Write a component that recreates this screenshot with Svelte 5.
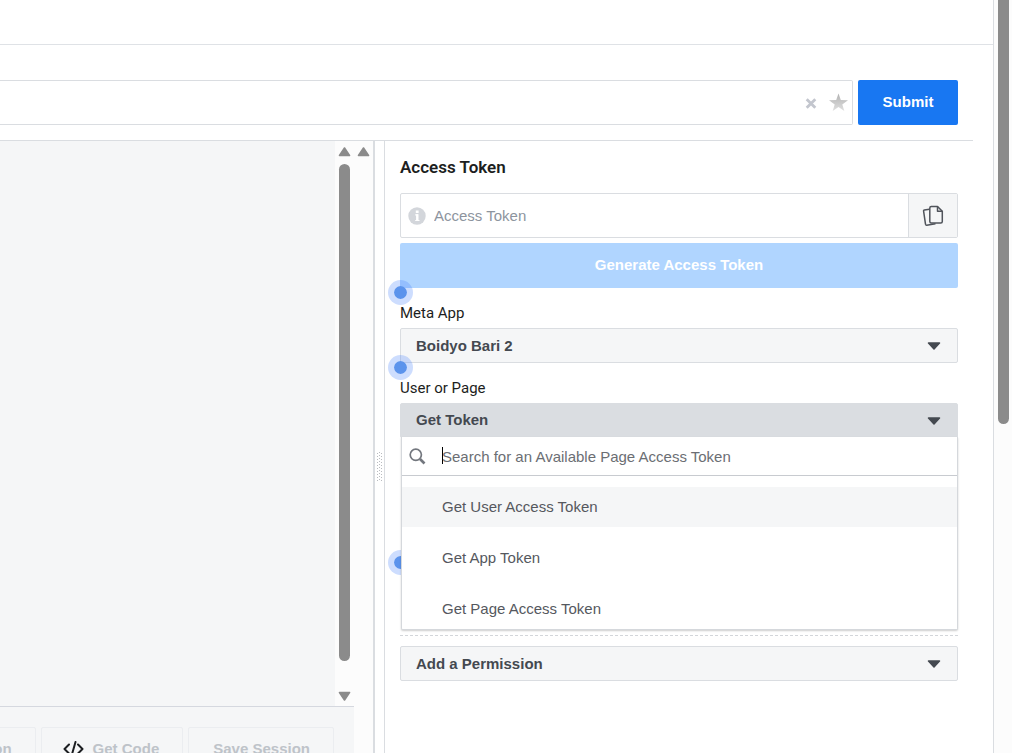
<script>
  const tokens = ['Get User Access Token', 'Get App Token', 'Get Page Access Token'];
  let active = $state(0);
  let query = $state('');
  let search = $state('');
</script>

<div class="page">
  <main>
    <header></header>

    <form class="query" onsubmit={(e) => e.preventDefault()}>
      <div class="field">
        <input aria-label="Query" bind:value={query} />
        <button type="button" class="icon" aria-label="Clear">
          <svg width="12" height="12" viewBox="0 0 12 12"><path d="M1.700 2.200 10.300 10.800M10.300 2.200 1.700 10.800" stroke="#c3c6ce" stroke-width="2.800" /></svg>
        </button>
        <button type="button" class="icon" aria-label="Favorite">
          <svg width="19" height="20" viewBox="0 0 19 20">
            <defs><linearGradient id="star" x1="0" y1="0" x2="0" y2="1"><stop offset="0" stop-color="#b2b2b2" /><stop offset="1" stop-color="#e0e0e0" /></linearGradient></defs>
            <path d="M9.500 0.500 11.800 7 19 7.200 13.300 11.400 15.300 18.100 9.500 14.100 3.700 18.100 5.700 11.400 0 7.200 7.200 7Z" fill="url(#star)" />
          </svg>
        </button>
      </div>
      <button class="submit">Submit</button>
    </form>

    <div class="workspace">
      <section class="response">
        <div class="result">
          <div class="editor">
            <div class="code"></div>
            <div class="rail">
              <svg width="13" height="10" viewBox="0 0 13 10"><path d="M6.500 1 11.500 8.500H1.500Z" fill="#8b8b8b" stroke="#8b8b8b" stroke-width="1.600" stroke-linejoin="round" /></svg>
              <div class="thumb"></div>
              <svg width="13" height="10" viewBox="0 0 13 10"><path d="M6.500 9 11.500 1.500H1.500Z" fill="#8b8b8b" stroke="#8b8b8b" stroke-width="1.600" stroke-linejoin="round" /></svg>
            </div>
          </div>
          <footer>
            <button>Copy Debug Information</button>
            <button class="with-icon">
              <svg width="21" height="16" viewBox="0 0 21 16"><path d="M6 3.500 1.500 8 6 12.500M15 3.500 19.500 8 15 12.500M12.500 1 8.500 15" fill="none" stroke="#1c1e21" stroke-width="2" stroke-linecap="round" stroke-linejoin="round" /></svg>
              Get Code
            </button>
            <button>Save Session</button>
          </footer>
        </div>
        <div class="rail outer">
          <svg width="13" height="10" viewBox="0 0 13 10"><path d="M6.500 1 11.500 8.500H1.500Z" fill="#8b8b8b" stroke="#8b8b8b" stroke-width="1.600" stroke-linejoin="round" /></svg>
        </div>
      </section>

      <div class="splitter">
        <svg width="6" height="30" viewBox="0 0 6 30">
          {#each Array(10) as _, i}
            <path d="M0 {i * 3 + 1.5}h1M4 {i * 3 + 1.5}h1M2 {i * 3 + 0.5}h1" stroke="#b9bbbf" />
          {/each}
        </svg>
      </div>

      <section class="panel">
        <h2>Access Token</h2>
        <div class="token">
          <svg width="18" height="18" viewBox="0 0 18 18"><circle cx="9" cy="9" r="8.700" fill="#d3d6db" /><path d="M7.200 7.800H9.300V13.500M7.200 13.500H11.500" fill="none" stroke="#fff" stroke-width="1.200" /><path d="M9.300 7.200V14" stroke="#fff" stroke-width="2.400" /><rect x="7.800" y="3.500" width="2.800" height="2.500" fill="#fff" /></svg>
          <input aria-label="Access Token" placeholder="Access Token" />
          <button aria-label="Copy token">
            <svg width="22" height="22" viewBox="0 0 22 22" fill="none" stroke="#50545b" stroke-width="1.500" stroke-linejoin="round">
              <path d="M7.500 4.200 2.400 5Q1.400 5.200 1.600 6.200L3.500 19.200Q3.700 20.300 4.700 20.200L13.500 18.800" />
              <path d="M9.300 1.500H15.500L20.300 6.300V16.500Q20.300 18 18.800 18H9.300Q7.800 18 7.800 16.500V3Q7.800 1.500 9.300 1.500Z" />
              <path d="M15.500 1.500V6.300H20.300" />
            </svg>
          </button>
        </div>
        <button class="generate">Generate Access Token</button>

        <div class="group">
          <i class="beacon"></i>
          <label for="app">Meta App</label>
          <div class="select">
            <select id="app"><option>Boidyo Bari 2</option></select>
            <svg width="14" height="8" viewBox="0 0 14 8"><path d="M1.500 1H12.500L7 7Z" fill="#444950" stroke="#444950" stroke-width="1.500" stroke-linejoin="round" /></svg>
          </div>
        </div>

        <div class="group">
          <i class="beacon"></i>
          <label for="owner">User or Page</label>
          <div class="select open">
            <button id="owner" aria-haspopup="listbox" aria-expanded="true">Get Token</button>
            <svg width="14" height="8" viewBox="0 0 14 8"><path d="M1.500 1H12.500L7 7Z" fill="#444950" stroke="#444950" stroke-width="1.500" stroke-linejoin="round" /></svg>
            <div class="menu">
              <div class="search">
                <svg width="17" height="17" viewBox="0 0 17 17" fill="none" stroke="#73777e"><circle cx="6.800" cy="6.800" r="5.600" stroke-width="1.700" /><path d="M11 11 15.500 15.500" stroke-width="2.600" /></svg>
                <div class="entry">
                  <input aria-label="Search tokens" placeholder="Search for an Available Page Access Token" bind:value={search} />
                  <span class="caret"></span>
                </div>
              </div>
              <ul>
                {#each tokens as name, i}
                  <li><button class:active={active === i} onmouseenter={() => (active = i)}>{name}</button></li>
                {/each}
              </ul>
            </div>
          </div>
        </div>

        <div class="permissions"><i class="beacon"></i></div>
        <div class="select">
          <select aria-label="Add a Permission"><option>Add a Permission</option></select>
          <svg width="14" height="8" viewBox="0 0 14 8"><path d="M1.500 1H12.500L7 7Z" fill="#444950" stroke="#444950" stroke-width="1.500" stroke-linejoin="round" /></svg>
        </div>
      </section>
    </div>
  </main>
  <aside class="scroll"><div></div></aside>
</div>

<style>
  .page, .page * { box-sizing: border-box; }
  .page {
    display: flex;
    height: 100vh;
    overflow: hidden;
    background: #fff;
    color: #1c1e21;
    font: 15px/20px "Liberation Sans", Arial, sans-serif;
  }
  button, input, select { font: inherit; color: inherit; margin: 0; }
  button { cursor: pointer; }
  svg { display: block; flex: none; }
  main { flex: 1; min-width: 0; display: flex; flex-direction: column; }
  header { flex: none; height: 45px; border-bottom: 1px solid #dfe2e6; }
  .scroll { flex: none; width: 19px; padding: 0 3px 0 4px; border-left: 1px solid #dadde1; background: #fcfcfc; }
  .scroll div { height: 56.3%; border-radius: 0 0 6px 6px; background: #8b8b8b; }

  .query { flex: none; display: flex; gap: 5px; margin-right: 20px; padding: 35px 15px 15px 0; border-bottom: 1px solid #dadde1; }
  .field { flex: 1; display: flex; align-items: center; gap: 12px; height: 45px; padding-right: 4px; border: 1px solid #dadde1; border-left: 0; border-radius: 0 2px 2px 0; }
  .field input { flex: 1; min-width: 0; height: 100%; padding: 0 12px; border: 0; outline: 0; background: none; }
  .icon { padding: 0; border: 0; background: none; }
  .submit, .generate { padding: 0 0 2px; border: 0; border-radius: 2px; color: #fff; font-weight: bold; }
  .submit { width: 100px; background: #1877f2; }

  .workspace { flex: 1; min-height: 0; display: flex; }
  .response { flex: 1; min-width: 0; display: flex; border-right: 2px solid #dadde1; }
  .result { flex: 1; min-width: 0; display: flex; flex-direction: column; }
  .editor { flex: 1; min-height: 0; display: flex; }
  .code { flex: 1; background: #f5f6f7; }
  .rail { flex: none; width: 19px; display: flex; flex-direction: column; align-items: center; gap: 7px; padding: 6px 0 5px; background: #fcfcfc; }
  .thumb { flex: 1; width: 11px; margin-bottom: 23px; border-radius: 6px; background: #8b8b8b; }
  footer { flex: none; display: flex; justify-content: flex-end; gap: 5px; height: 47px; padding: 20px 20px 0 0; overflow: hidden; border-top: 1px solid #d5d8df; background: #f5f6f7; }
  footer button { flex: none; display: flex; align-items: center; gap: 9px; height: 44px; padding: 0 23px 0 24px; border: 1px solid #ebedf0; border-radius: 2px; background: #f5f6f7; color: #bec3c9; font-weight: bold; white-space: nowrap; }
  footer .with-icon { padding-left: 21px; }

  .splitter { flex: none; width: 10px; display: flex; align-items: center; padding: 40px 0 0 2px; border-right: 1px solid #dadde1; }
  .panel { flex: none; width: 608px; padding: 16px 35px 0 15px; }
  h2 { margin: 0 0 16px; font: 600 17px/20px Roboto, sans-serif; }
  .token { display: flex; align-items: center; height: 45px; margin-bottom: 5px; padding-left: 7px; border: 1px solid #dadde1; border-radius: 2px; }
  .token input { flex: 1; min-width: 0; height: 100%; padding: 0 8px; border: 0; outline: 0; background: none; }
  .token input::placeholder { color: #8d949e; opacity: 1; }
  .token button { display: grid; place-items: center; width: 49px; height: 100%; padding: 0; border: 0; border-left: 1px solid #dadde1; background: #f5f6f7; }
  .generate { display: block; width: 100%; height: 45px; background: #b0d5ff; }

  .group { position: relative; padding-top: 15px; }
  label { display: block; margin-bottom: 5px; font: 15px/20px Roboto, sans-serif; }
  .beacon { position: absolute; top: -8px; left: -12px; width: 25px; height: 25px; border: 6px solid rgba(77, 133, 250, 0.28); border-radius: 50%; background: #5b93ec; background-clip: padding-box; }
  .select { position: relative; display: flex; align-items: center; height: 35px; padding-right: 16px; border: 1px solid #dadde1; border-radius: 2px; background: #f5f6f7; color: #444950; }
  .select > select, .select > button { flex: 1; height: 100%; padding: 0 0 0 15px; border: 0; outline: 0; appearance: none; background: none; font-weight: bold; text-align: left; }
  .select > button { padding-bottom: 2px; }
  .open { background: #dadde1; }
  .menu { position: absolute; z-index: 2; top: 33px; left: 0; right: -1px; border: 1px solid #d5d8dc; border-top: 0; border-radius: 0 0 2px 2px; background: #fff; box-shadow: 0 1px 2px rgba(0, 0, 0, 0.2); }
  .search { display: flex; align-items: center; gap: 16px; height: 39px; padding-left: 7px; border-bottom: 1px solid #c8cbd0; }
  .entry { position: relative; flex: 1; }
  .search input { display: block; width: 100%; height: 24px; padding: 0; border: 0; outline: 0; background: none; }
  .search input::placeholder { color: #6b6e73; opacity: 1; }
  .caret { position: absolute; top: 3px; left: 0; width: 1px; height: 17px; background: #000; }
  ul { display: flex; flex-direction: column; gap: 11px; margin: 0; padding: 11px 0 0; list-style: none; }
  li button { display: block; width: 100%; height: 40px; padding: 0 0 0 40px; border: 0; background: none; color: #55585e; text-align: left; }
  li button.active { background: #f5f6f7; }
  .permissions { position: relative; height: 198px; margin-bottom: 10px; border-bottom: 1px dashed #d3d6da; }
  .permissions .beacon { top: 112px; }
</style>
